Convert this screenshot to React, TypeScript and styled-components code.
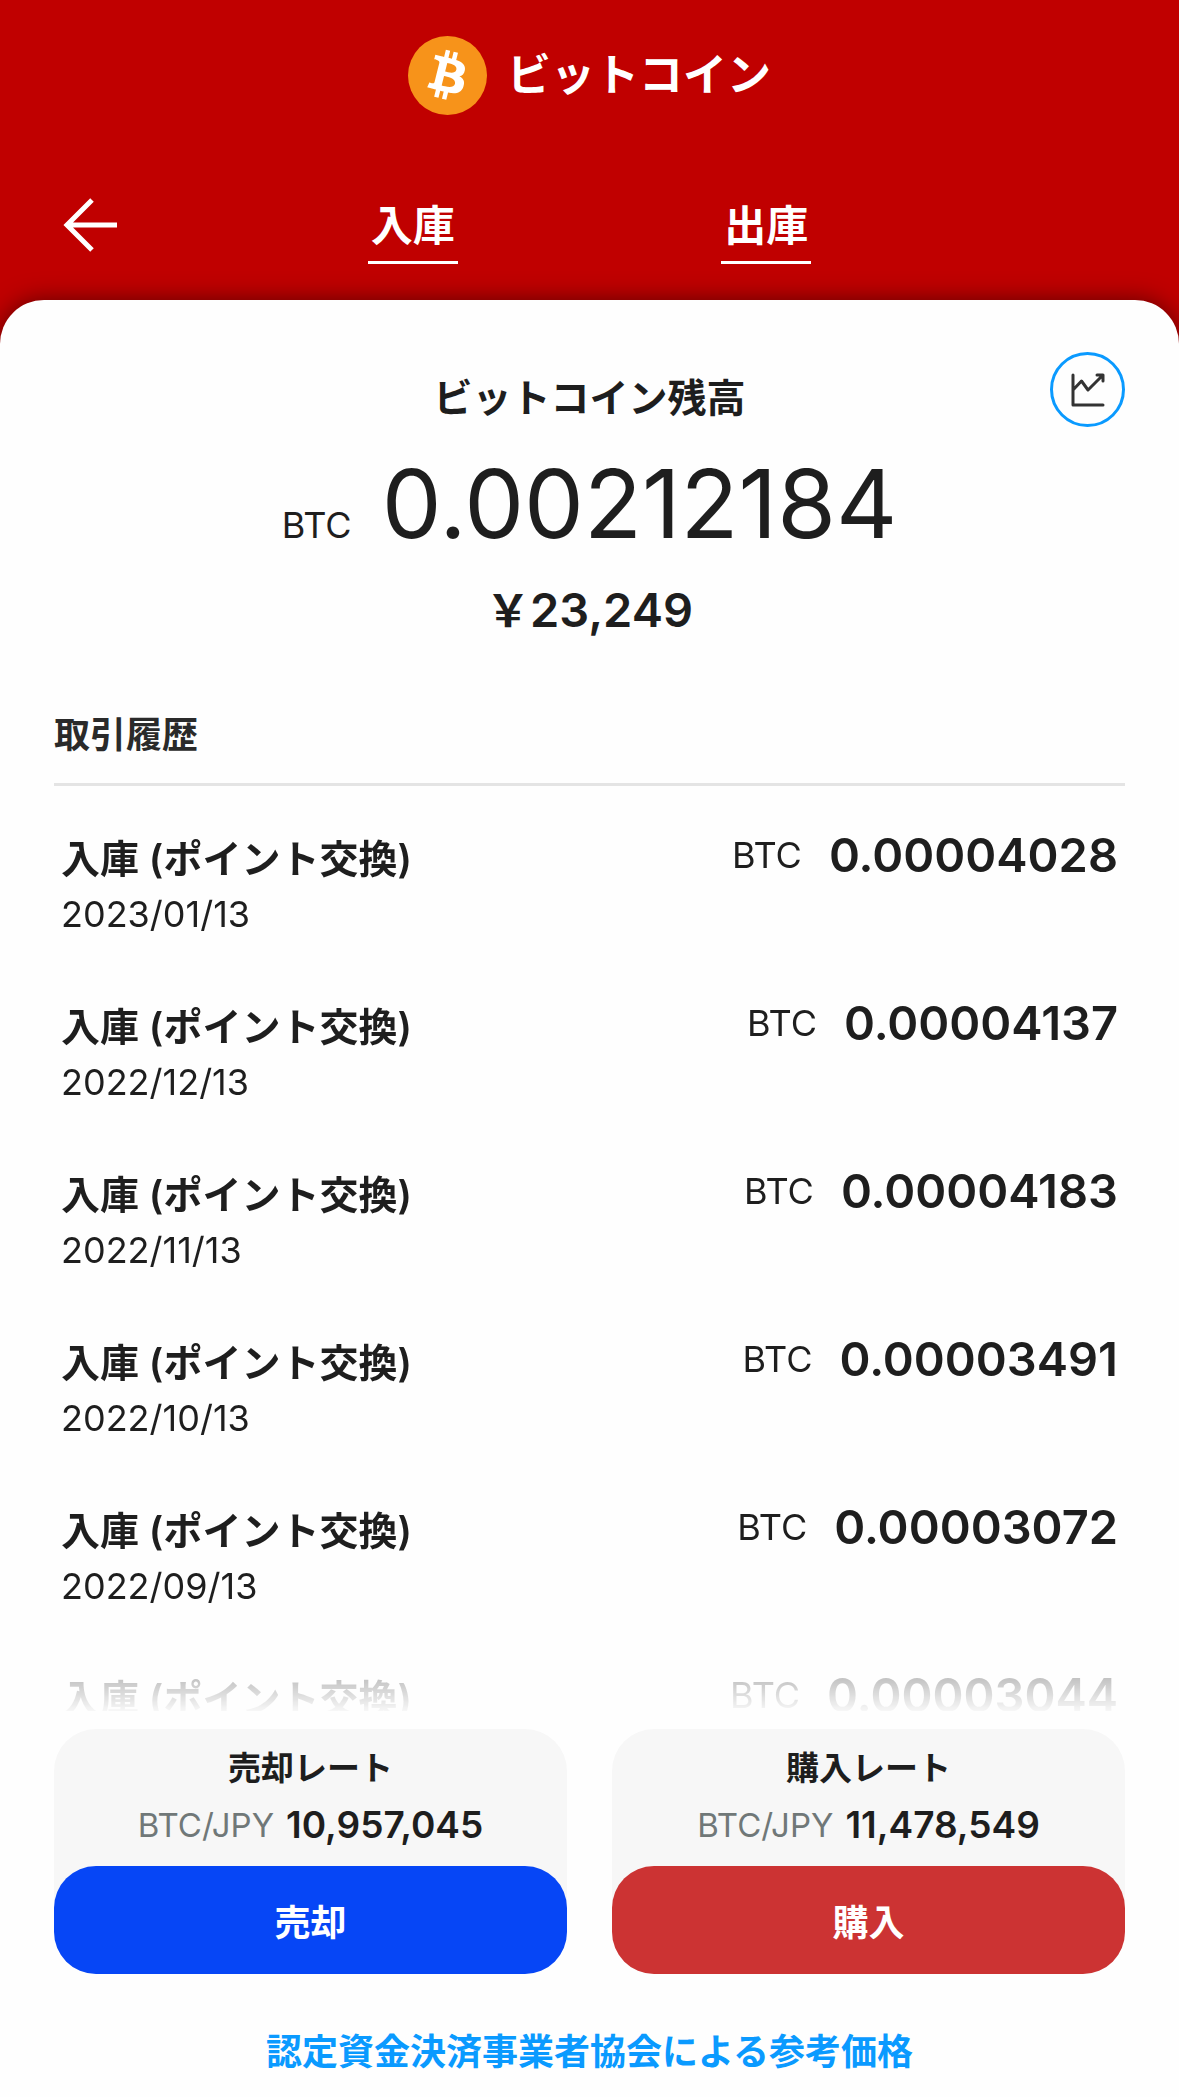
import React from "react";
import styled, { createGlobalStyle } from "styled-components";

const latin = '"Inter", "Noto Sans CJK JP", sans-serif';

const Global = createGlobalStyle`
  * { box-sizing: border-box; }
  body { margin: 0; background: #fefefe; }
  button { border: 0; padding: 0; margin: 0; font: inherit; cursor: pointer; }
  a { text-decoration: none; }
`;

const Screen = styled.div`
  display: flex;
  flex-direction: column;
  height: 100vh;
  background: #c00000;
  color: #1e1e1e;
  font-family: ${latin};
  overflow: hidden;
`;

const Header = styled.header`
  flex: none;
  color: #fff;
  height: 300px;
`;

const Brand = styled.h1`
  display: flex;
  align-items: center;
  justify-content: center;
  gap: 20px;
  margin: 0;
  height: 150px;
  font-size: 44px;
  line-height: 60px;
  font-weight: 600;
`;

const CoinLogo = styled.svg`
  width: 79px;
  height: 79px;
`;

const Nav = styled.nav`
  display: grid;
  grid-template-columns: 236px 1fr 1fr 236px;
  align-items: center;
  height: 150px;
`;

const BackButton = styled.button`
  display: flex;
  width: 60px;
  height: 60px;
  margin-left: 60px;
  background: none;
  color: inherit;
`;

const NavLink = styled.a`
  justify-self: center;
  width: 90px;
  height: 78px;
  border-bottom: 3px solid #fff;
  color: #fff;
  font-size: 42px;
  line-height: 80px;
  font-weight: 600;
  text-align: center;
  white-space: nowrap;
`;

const Sheet = styled.main`
  flex: 1;
  min-height: 0;
  display: flex;
  flex-direction: column;
  padding: 0 54px;
  border-radius: 44px 44px 0 0;
  background: #fefefe;
  box-shadow: 0 0 24px rgba(0, 0, 0, 0.5);
`;

const Balance = styled.section`
  position: relative;
  flex: none;
  display: flex;
  flex-direction: column;
  align-items: center;
  padding-top: 68px;
`;

const ChartButton = styled.button`
  position: absolute;
  top: 52px;
  right: 0;
  display: flex;
  align-items: center;
  justify-content: center;
  width: 75px;
  height: 75px;
  border: 3px solid #0a9aff;
  border-radius: 50%;
  background: none;
  color: #333;
`;

const BalanceTitle = styled.h2`
  margin: 0;
  font-size: 39px;
  line-height: 60px;
  font-weight: 600;
`;

const BalanceAmount = styled.p`
  display: flex;
  align-items: baseline;
  gap: 30px;
  margin: 0;
  font-size: 95px;
  line-height: 152px;
`;

const Unit = styled.span`
  font-size: 36px;
  line-height: 48px;
  font-weight: 400;
`;

const Yen = styled.p`
  margin: 0;
  font-size: 47px;
  line-height: 60px;
  font-weight: 600;
`;

const YenSign = styled.span`
  font-size: 44px;
`;

const HistoryTitle = styled.h2`
  flex: none;
  margin: 64px 0 0;
  padding-bottom: 18px;
  border-bottom: 3px solid #e4e4e4;
  font-size: 36px;
  line-height: 60px;
  font-weight: 600;
  color: #2a2a2a;
`;

const History = styled.ul`
  flex: 1;
  min-height: 0;
  margin: 0;
  padding: 41px 7px 0;
  list-style: none;
  overflow: hidden;
  mask-image: linear-gradient(
    #000 calc(100% - 105px),
    rgba(0, 0, 0, 0.26) calc(100% - 32px),
    rgba(0, 0, 0, 0.03)
  );
`;

const Entry = styled.li`
  display: flex;
  justify-content: space-between;
  align-items: flex-start;
  height: 168px;
`;

const EntryName = styled.p`
  margin: 0;
  font-size: 39px;
  line-height: 64px;
  font-weight: 600;
`;

const EntryDate = styled.time`
  display: block;
  font-size: 36px;
  line-height: 46px;
`;

const EntryAmount = styled.p`
  display: flex;
  align-items: center;
  gap: 27px;
  margin: 0;
  font-size: 47px;
  line-height: 56px;
  font-weight: 600;
`;

const Trade = styled.footer`
  flex: none;
  display: grid;
  grid-template-columns: 1fr 1fr;
  column-gap: 45px;
  padding-top: 18px;
`;

const RateCard = styled.section`
  display: flex;
  flex-direction: column;
  align-items: center;
  padding-top: 15px;
  border-radius: 42px;
  background: #f7f7f7;
`;

const RateTitle = styled.h3`
  margin: 0;
  font-size: 33px;
  line-height: 48px;
  font-weight: 600;
`;

const Rate = styled.p`
  display: flex;
  align-items: center;
  gap: 12px;
  margin: 0 0 8px;
  font-size: 37px;
  line-height: 66px;
  font-weight: 600;
`;

const Pair = styled.span`
  color: #707878;
  font-size: 33px;
  font-weight: 400;
`;

const TradeButton = styled.button<{ $color: string }>`
  width: 100%;
  height: 108px;
  border-radius: 42px;
  background: ${(p) => p.$color};
  color: #fff;
  font-size: 36px;
  font-weight: 600;
`;

const Reference = styled.a`
  flex: none;
  padding: 48px 0 15px;
  color: #0a9aff;
  font-size: 36px;
  line-height: 60px;
  font-weight: 600;
  text-align: center;
`;

const entries = [
  { date: "2023/01/13", amount: "0.00004028" },
  { date: "2022/12/13", amount: "0.00004137" },
  { date: "2022/11/13", amount: "0.00004183" },
  { date: "2022/10/13", amount: "0.00003491" },
  { date: "2022/09/13", amount: "0.00003072" },
  { date: "2022/08/13", amount: "0.00003044" },
];

const rates = [
  { action: "売却", rate: "10,957,045", color: "#0646f6" },
  { action: "購入", rate: "11,478,549", color: "#cc3333" },
];

export default function App() {
  return (
    <Screen>
      <Global />
      <Header>
        <Brand>
          <CoinLogo viewBox="0 0 64 64" aria-hidden="true">
            <circle cx="32" cy="32" r="32" fill="#f7931a" />
            <path
              fill="#fff"
              d="M46.103 27.444c.637-4.258-2.605-6.547-7.038-8.074l1.438-5.768-3.511-.875-1.4 5.616c-.923-.23-1.871-.447-2.813-.662l1.41-5.653-3.509-.875-1.439 5.766c-.764-.174-1.514-.346-2.242-.527l.004-.018-4.842-1.209-.934 3.75s2.605.597 2.55.634c1.422.355 1.679 1.296 1.636 2.042l-1.638 6.571c.098.025.225.061.365.117l-.371-.092-2.296 9.205c-.174.432-.615 1.08-1.609.834.035.051-2.552-.637-2.552-.637l-1.743 4.019 4.569 1.139c.85.213 1.683.436 2.503.646l-1.453 5.834 3.507.875 1.439-5.772c.958.26 1.888.5 2.798.726l-1.434 5.745 3.511.875 1.453-5.823c5.987 1.133 10.489.676 12.384-4.739 1.527-4.36-.076-6.875-3.226-8.515 2.294-.529 4.022-2.038 4.483-5.155zM38.081 38.693c-1.085 4.36-8.426 2.003-10.806 1.412l1.928-7.729c2.38.594 10.012 1.77 8.878 6.317zm1.086-11.312c-.99 3.966-7.1 1.951-9.082 1.457l1.748-7.01c1.982.494 8.365 1.416 7.334 5.553z"
            />
          </CoinLogo>
          ビットコイン
        </Brand>
        <Nav>
          <BackButton aria-label="戻る">
            <svg width="60" height="60" viewBox="0 0 60 60" fill="none" stroke="currentColor" strokeWidth="5">
              <path d="M57 30H9M32 5L7 30l25 25" />
            </svg>
          </BackButton>
          <NavLink href="#deposit">入庫</NavLink>
          <NavLink href="#withdraw">出庫</NavLink>
        </Nav>
      </Header>
      <Sheet>
        <Balance>
          <ChartButton aria-label="チャート">
            <svg width="36" height="36" viewBox="0 0 36 36" fill="none" stroke="currentColor" strokeWidth="3" strokeLinecap="round" strokeLinejoin="round">
              <path d="M3 3v30h30M3 18l8.5-9 6.5 9L33 3M27 3h6v6" />
            </svg>
          </ChartButton>
          <BalanceTitle>ビットコイン残高</BalanceTitle>
          <BalanceAmount>
            <Unit>BTC</Unit>0.00212184
          </BalanceAmount>
          <Yen>
            <YenSign>{"\uFFE5"}</YenSign>23,249
          </Yen>
        </Balance>
        <HistoryTitle>取引履歴</HistoryTitle>
        <History>
          {entries.map((e) => (
            <Entry key={e.date}>
              <div>
                <EntryName>入庫 (ポイント交換)</EntryName>
                <EntryDate>{e.date}</EntryDate>
              </div>
              <EntryAmount>
                <Unit>BTC</Unit>
                {e.amount}
              </EntryAmount>
            </Entry>
          ))}
        </History>
        <Trade>
          {rates.map((r) => (
            <RateCard key={r.action}>
              <RateTitle>{r.action}レート</RateTitle>
              <Rate>
                <Pair>BTC/JPY</Pair>
                {r.rate}
              </Rate>
              <TradeButton $color={r.color}>{r.action}</TradeButton>
            </RateCard>
          ))}
        </Trade>
        <Reference href="#reference">認定資金決済事業者協会による参考価格</Reference>
      </Sheet>
    </Screen>
  );
}
